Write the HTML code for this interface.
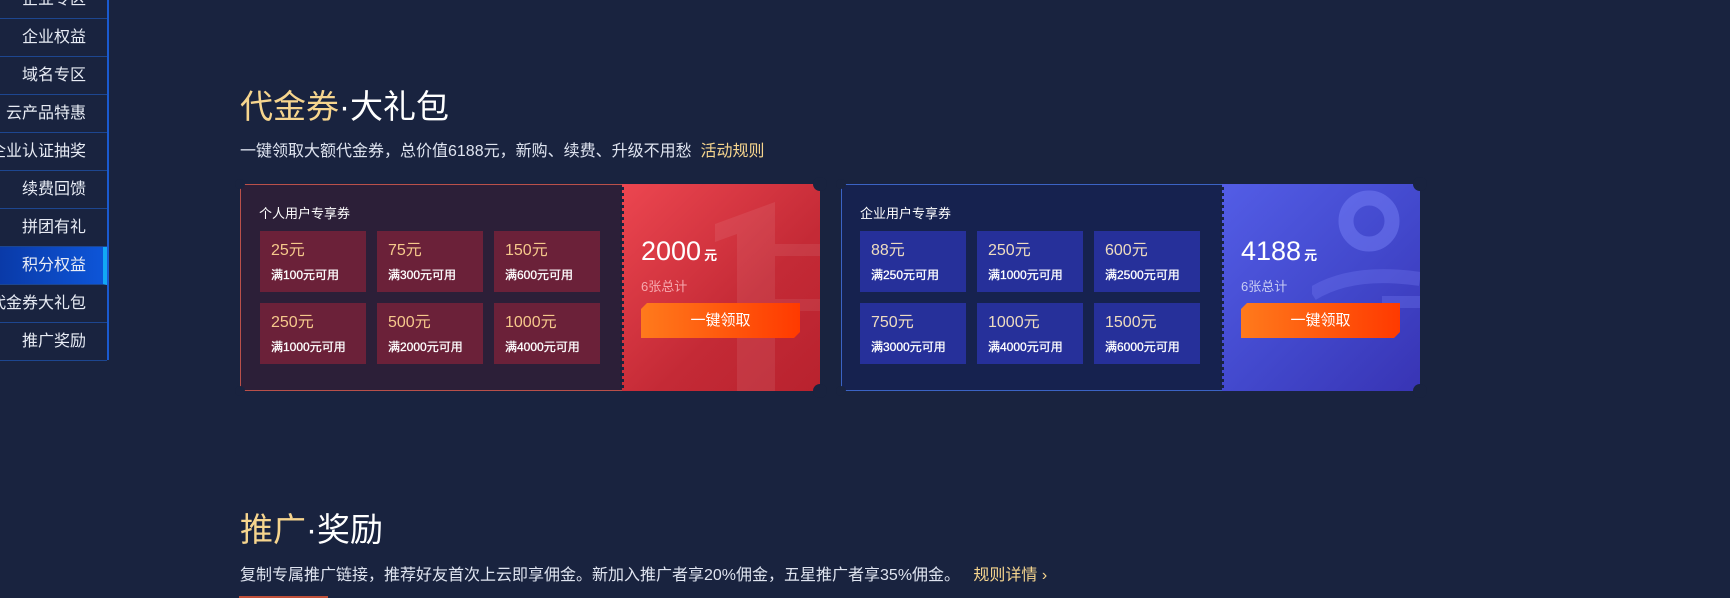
<!DOCTYPE html>
<html><head><meta charset="utf-8"><style>
*{margin:0;padding:0;box-sizing:border-box}
body{width:1730px;height:598px;background:#19233f;overflow:hidden;position:relative;font-family:"Liberation Sans","Noto Sans CJK SC",sans-serif;color:#fff}
.a{position:absolute}
.side{left:0;top:0;width:109px;height:360px;border-right:2px solid #1a5ad0}
.it{position:absolute;left:0;width:107px;height:38px;border-bottom:1px solid #1d4690;text-align:right;padding-right:21px;font-size:16px;line-height:38px;color:#e8ecf5;white-space:nowrap;overflow:hidden;direction:rtl}
.it.on{background:linear-gradient(90deg,#0a3aa8,#0d55d8);border-right:4px solid #12a8f5;padding-right:17px}
.h{font-size:33px;line-height:36px;white-space:nowrap}
.h .y{color:#f6d58e}
.sub{font-size:16px;color:#dfe4f0;white-space:nowrap}
.card{position:absolute;top:184px;height:207px}
.lp{position:absolute;left:0;top:0;height:207px;border:1px solid #b9504a;border-right:none}
.tile{position:absolute;width:106px;height:61px;padding:11px 0 0 11px}
.tile b{display:block;font-weight:normal;font-size:16px;color:#f6c98c;line-height:18px}
.tile i{display:block;font-style:normal;font-size:12px;color:#fff;margin-top:6px;-webkit-text-stroke:0.3px #fff}
.rp{position:absolute;top:0;height:207px;overflow:hidden}
.perf{position:absolute;top:0;width:4px;height:207px;background:repeating-linear-gradient(180deg,transparent 0 3px,#19233f 3px 6px)}
.num{position:absolute;left:19px;top:52px;font-size:27px;white-space:nowrap}
.num small{font-size:13px;font-weight:bold;margin-left:3px}
.tot{position:absolute;left:19px;top:92px;font-size:13px}
.btn{position:absolute;left:19px;top:119px;width:159px;height:35px;background:linear-gradient(90deg,#ff7a1c,#ff3a00);clip-path:polygon(6px 0,100% 0,100% calc(100% - 6px),calc(100% - 6px) 100%,0 100%,0 6px);font-size:15px;text-align:center;line-height:35px;color:#fff}
.n{position:absolute;width:14px;height:14px;border-radius:50%;background:#19233f}
.m{position:absolute;width:10px;height:10px;border-radius:50%;background:#19233f}
</style></head><body>
<div class="a side">
<div class="it" style="top:-19px">企业专区</div>
<div class="it" style="top:19px">企业权益</div>
<div class="it" style="top:57px">域名专区</div>
<div class="it" style="top:95px">云产品特惠</div>
<div class="it" style="top:133px">企业认证抽奖</div>
<div class="it" style="top:171px">续费回馈</div>
<div class="it" style="top:209px">拼团有礼</div>
<div class="it on" style="top:247px">积分权益</div>
<div class="it" style="top:285px">代金券大礼包</div>
<div class="it" style="top:323px">推广奖励</div>
</div>

<div class="a h" style="left:240px;top:89px"><span class="y">代金券</span>·大礼包</div>
<div class="a sub" style="left:240px;top:137px">一键领取大额代金券，总价值6188元，新购、续费、升级不用愁 &nbsp;<span style="color:#f6d58e">活动规则</span></div>

<!-- card 1 -->
<div class="card" style="left:240px;width:580px">
 <div class="lp" style="width:382px;background:#2c1f38"></div>
 <div class="a" style="left:19px;top:19px;font-size:13px">个人用户专享券</div>
 <div class="tile" style="left:20px;top:47px;background:#6b2139"><b>25元</b><i>满100元可用</i></div>
 <div class="tile" style="left:137px;top:47px;background:#6b2139"><b>75元</b><i>满300元可用</i></div>
 <div class="tile" style="left:254px;top:47px;background:#6b2139"><b>150元</b><i>满600元可用</i></div>
 <div class="tile" style="left:20px;top:119px;background:#6b2139"><b>250元</b><i>满1000元可用</i></div>
 <div class="tile" style="left:137px;top:119px;background:#6b2139"><b>500元</b><i>满2000元可用</i></div>
 <div class="tile" style="left:254px;top:119px;background:#6b2139"><b>1000元</b><i>满4000元可用</i></div>
 <div class="rp" style="left:382px;width:198px;background:linear-gradient(135deg,#ec4650,#c42a36 60%,#b8222e)">
  <svg class="a" style="left:85px;top:0" width="113" height="207"><path d="M8 40 L68 18 L68 207 L30 207 L30 50 L8 58Z" fill="rgba(255,255,255,0.08)"/><rect x="68" y="60" width="45" height="12" fill="rgba(255,255,255,0.08)"/><rect x="68" y="115" width="45" height="12" fill="rgba(255,255,255,0.07)"/></svg>
  <div class="num">2000<small>元</small></div>
  <div class="tot" style="color:#f6a8ae">6张总计</div>
  <div class="btn">一键领取</div>
 </div>
 <div class="perf" style="left:380px"></div>
 <div class="m" style="left:-5px;top:-5px"></div>
 <div class="m" style="left:-5px;bottom:-5px"></div>
 <div class="n" style="right:-7px;top:-7px"></div>
 <div class="n" style="right:-7px;bottom:-7px"></div>
</div>

<!-- card 2 -->
<div class="card" style="left:841px;width:579px">
 <div class="lp" style="width:381px;background:#16224f;border-color:#3b63c4"></div>
 <div class="a" style="left:19px;top:19px;font-size:13px">企业用户专享券</div>
 <div class="tile" style="left:19px;top:47px;background:#26309a"><b style="color:#eedcc0">88元</b><i>满250元可用</i></div>
 <div class="tile" style="left:136px;top:47px;background:#26309a"><b style="color:#eedcc0">250元</b><i>满1000元可用</i></div>
 <div class="tile" style="left:253px;top:47px;background:#26309a"><b style="color:#eedcc0">600元</b><i>满2500元可用</i></div>
 <div class="tile" style="left:19px;top:119px;background:#26309a"><b style="color:#eedcc0">750元</b><i>满3000元可用</i></div>
 <div class="tile" style="left:136px;top:119px;background:#26309a"><b style="color:#eedcc0">1000元</b><i>满4000元可用</i></div>
 <div class="tile" style="left:253px;top:119px;background:#26309a"><b style="color:#eedcc0">1500元</b><i>满6000元可用</i></div>
 <div class="rp" style="left:381px;width:198px;background:linear-gradient(135deg,#535de6,#4248cc 55%,#3834b4)">
  <svg class="a" style="left:90px;top:0" width="108" height="207"><circle cx="57" cy="37" r="23" fill="none" stroke="rgba(130,140,255,0.4)" stroke-width="15"/><path d="M0 110 Q40 85 108 95" fill="none" stroke="rgba(130,140,255,0.25)" stroke-width="14"/><rect x="70" y="112" width="38" height="12" fill="rgba(130,140,255,0.25)"/></svg>
  <div class="num">4188<small>元</small></div>
  <div class="tot" style="color:#c8ccf4">6张总计</div>
  <div class="btn">一键领取</div>
 </div>
 <div class="perf" style="left:379px"></div>
 <div class="m" style="left:-5px;top:-5px"></div>
 <div class="m" style="left:-5px;bottom:-5px"></div>
 <div class="n" style="right:-7px;top:-7px"></div>
 <div class="n" style="right:-7px;bottom:-7px"></div>
</div>

<div class="a h" style="left:240px;top:512px"><span class="y">推广</span>·奖励</div>
<div class="a sub" style="left:240px;top:561px">复制专属推广链接，推荐好友首次上云即享佣金。新加入推广者享20%佣金，五星推广者享35%佣金。 &nbsp;&nbsp;<span style="color:#f6d58e">规则详情 ›</span></div>
<div class="a" style="left:239px;top:596px;width:89px;height:2px;background:#c0503a"></div>
</body></html>
